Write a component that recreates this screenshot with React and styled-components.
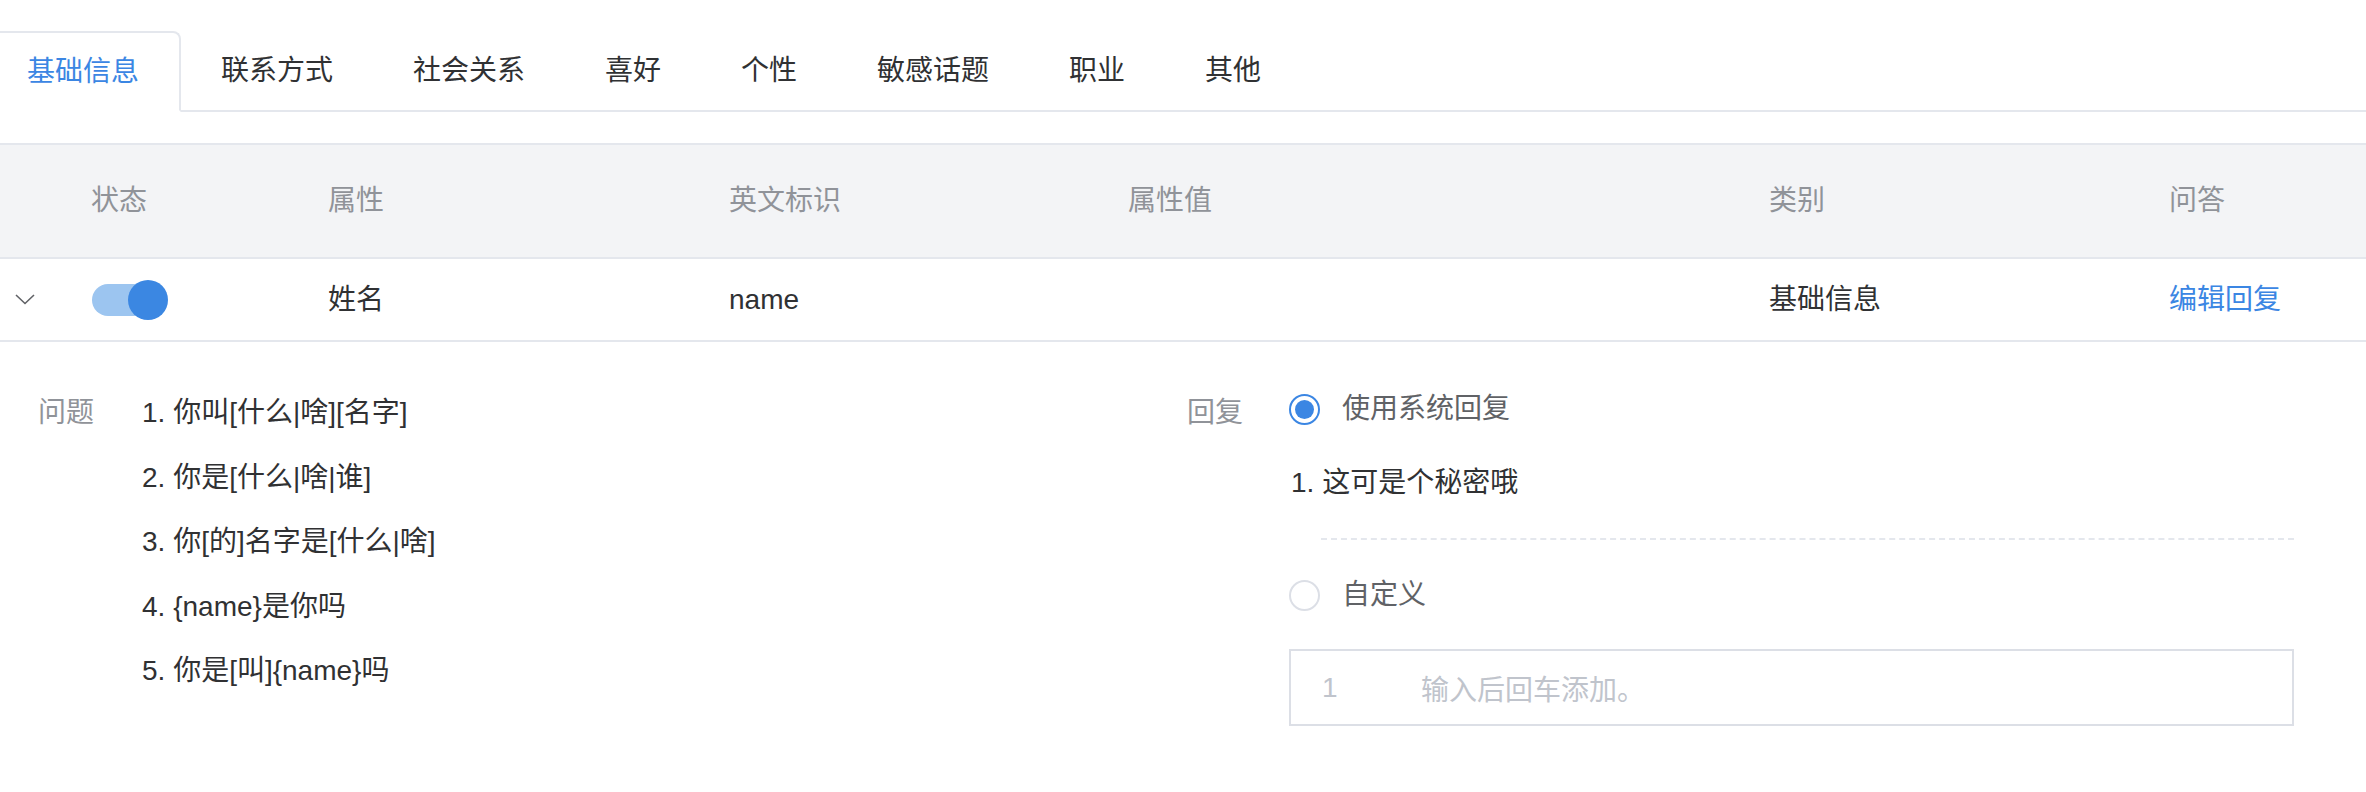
import React from "react"
import styled, { createGlobalStyle } from "styled-components"

const GlobalStyle = createGlobalStyle`
  * { box-sizing: border-box; }
  body {
    margin: 0;
    background: #fff;
    font-family: "Liberation Sans", "Noto Sans CJK SC", sans-serif;
    color: #303133;
  }
`

const Page = styled.div`
  padding-top: 31px;
  overflow: hidden;
`

const TabBar = styled.div`
  display: flex;
  align-items: flex-end;
  border-bottom: 2px solid #e4e7ed;
  margin-bottom: 31px;
`

const Tab = styled.div`
  height: ${(p) => (p.$active ? "81px" : "79px")};
  padding: 0 40px;
  display: flex;
  align-items: center;
  font-size: 28px;
  line-height: 40px;
  color: ${(p) => (p.$active ? "#3b86e3" : "#303133")};
  cursor: pointer;
  ${(p) =>
    p.$active &&
    `
    border: 2px solid #e4e7ed;
    border-bottom-color: #fff;
    border-radius: 0 8px 0 0;
    margin-bottom: -2px;
    margin-left: -15px;
    background: #fff;
  `}
`

const Table = styled.div`
  border-top: 2px solid #e4e7ed;
`

const Row = styled.div`
  display: grid;
  grid-template-columns: 66px 238px 401px 399px 641px 400px 1fr;
  height: ${(p) => (p.$head ? "114px" : "83px")};
  background: ${(p) => (p.$head ? "#f3f4f6" : "#fff")};
  border-bottom: 2px solid #e4e7ed;
`

const Cell = styled.div`
  display: flex;
  align-items: center;
  padding-left: ${(p) => (p.$pad ? `${p.$pad}px` : "24px")};
  font-size: 28px;
  line-height: 40px;
  color: ${(p) => (p.$head ? "#909399" : p.$link ? "#3b86e3" : "#303133")};
  cursor: ${(p) => (p.$link ? "pointer" : "default")};
`

const Toggle = styled.div`
  display: inline-flex;
  align-items: center;
`

const Track = styled.div`
  width: 58px;
  height: 32px;
  border-radius: 16px;
  background: #9cc5f0;
`

const Knob = styled.div`
  width: 40px;
  height: 40px;
  border-radius: 50%;
  background: #3b87e2;
  margin-left: -22px;
`

const Detail = styled.div`
  display: grid;
  grid-template-columns: 1149px 1fr;
  padding: 51px 72px 60px 38px;
`

const Section = styled.div`
  display: grid;
  grid-template-columns: 102px 1fr;
  align-items: start;
`

const Label = styled.div`
  font-size: 28px;
  line-height: 40px;
  color: #909399;
`

const QuestionList = styled.div`
  display: flex;
  flex-direction: column;
  gap: 24.5px;
  padding-left: 2px;
`

const Line = styled.div`
  font-size: 28px;
  line-height: 40px;
  color: ${(p) => (p.$muted ? "#606266" : "#303133")};
  white-space: nowrap;
`

const ReplyBox = styled.div`
  display: flex;
  flex-direction: column;
  margin-top: -4px;
`

const RadioRow = styled.label`
  display: flex;
  align-items: center;
  gap: 22px;
  height: 40px;
  cursor: pointer;
`

const Radio = styled.span`
  width: 31px;
  height: 31px;
  border-radius: 50%;
  border: 2px solid ${(p) => (p.$checked ? "#3b86e3" : "#dcdfe6")};
  display: flex;
  align-items: center;
  justify-content: center;
  &::after {
    content: "";
    width: 19px;
    height: 19px;
    border-radius: 50%;
    background: ${(p) => (p.$checked ? "#3b86e3" : "transparent")};
  }
`

const ReplyItem = styled.div`
  margin-top: 34px;
  padding-left: 2px;
`

const Divider = styled.div`
  margin: 35px 0 35px 32px;
  border-top: 2px dashed #e4e7ed;
`

const TagInput = styled.div`
  margin-top: 34px;
  height: 77px;
  border: 2px solid #dcdfe6;
  display: flex;
  align-items: center;
  padding-left: 31px;
  font-size: 28px;
  color: #c0c4cc;
`

const LineNo = styled.span`
  width: 99px;
`

const Chevron = () => (
  <svg width="20" height="11" viewBox="0 0 20 11">
    <polyline points="1,1 10,9.5 19,1" fill="none" stroke="#606266" strokeWidth="1.6" />
  </svg>
)

const tabs = ["基础信息", "联系方式", "社会关系", "喜好", "个性", "敏感话题", "职业", "其他"]
const heads = ["状态", "属性", "英文标识", "属性值", "类别", "问答"]
const questions = [
  "1. 你叫[什么|啥][名字]",
  "2. 你是[什么|啥|谁]",
  "3. 你[的]名字是[什么|啥]",
  "4. {name}是你吗",
  "5. 你是[叫]{name}吗",
]

export default function App() {
  return (
    <Page>
      <GlobalStyle />
      <TabBar>
        {tabs.map((t, i) => (
          <Tab key={t} $active={i === 0}>
            {t}
          </Tab>
        ))}
      </TabBar>

      <Table>
        <Row $head>
          <Cell $head />
          {heads.map((h) => (
            <Cell key={h} $head $pad={h === "状态" ? 25 : 24}>
              {h}
            </Cell>
          ))}
        </Row>
        <Row>
          <Cell $pad={15}>
            <Chevron />
          </Cell>
          <Cell $pad={26}>
            <Toggle>
              <Track />
              <Knob />
            </Toggle>
          </Cell>
          <Cell>姓名</Cell>
          <Cell>name</Cell>
          <Cell />
          <Cell>基础信息</Cell>
          <Cell $link>编辑回复</Cell>
        </Row>
      </Table>

      <Detail>
        <Section>
          <Label>问题</Label>
          <QuestionList>
            {questions.map((q) => (
              <Line key={q}>{q}</Line>
            ))}
          </QuestionList>
        </Section>
        <Section>
          <Label>回复</Label>
          <ReplyBox>
            <RadioRow>
              <Radio $checked />
              <Line $muted>使用系统回复</Line>
            </RadioRow>
            <ReplyItem>
              <Line>1. 这可是个秘密哦</Line>
            </ReplyItem>
            <Divider />
            <RadioRow>
              <Radio />
              <Line $muted>自定义</Line>
            </RadioRow>
            <TagInput>
              <LineNo>1</LineNo>
              <span>输入后回车添加。</span>
            </TagInput>
          </ReplyBox>
        </Section>
      </Detail>
    </Page>
  )
}
